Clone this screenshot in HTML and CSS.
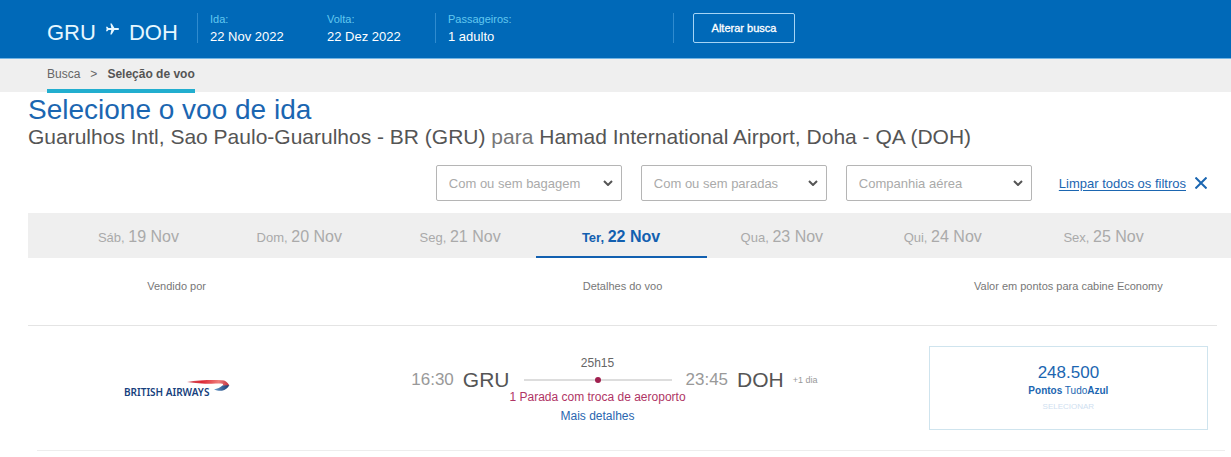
FILE: index.html
```html
<!DOCTYPE html>
<html lang="pt-BR">
<head>
<meta charset="utf-8">
<meta name="viewport" content="width=device-width, initial-scale=1">
<title>Seleção de voo</title>
<link rel="stylesheet" href="styles.css">
</head>
<body>
<header class="search-bar">
  <div class="route">
    <span>GRU</span>
    <svg class="plane" viewBox="0 0 24 24" aria-hidden="true"><path d="M24 12c0-1.200-1-1.800-2.500-1.800h-6L10.500 2H8l1.800 8.200H4.500L2.500 8H0l1.200 4L0 16h2.500l2-2.200h5.300L8 22h2.500l5-8.200h6c1.500 0 2.500-.6 2.500-1.800z"/></svg>
    <span>DOH</span>
  </div>
  <dl class="dates">
    <div class="field"><dt>Ida:</dt><dd>22 Nov 2022</dd></div>
    <div class="field"><dt>Volta:</dt><dd>22 Dez 2022</dd></div>
  </dl>
  <dl class="passengers">
    <div class="field"><dt>Passageiros:</dt><dd>1 adulto</dd></div>
  </dl>
  <div class="change"><button class="change-button" type="button">Alterar busca</button></div>
</header>
<nav class="crumb-bar" aria-label="Etapas">
  <div class="crumbs"><a href="#busca">Busca</a><span>&gt;</span><strong>Seleção de voo</strong></div>
</nav>
<main class="content">
  <h1 class="title">Selecione o voo de ida</h1>
  <h2 class="subtitle">Guarulhos Intl, Sao Paulo-Guarulhos - BR (GRU) <span>para</span> Hamad International Airport, Doha - QA (DOH)</h2>
  <form class="filters">
    <div class="filter">
      <select aria-label="Bagagem"><option>Com ou sem bagagem</option></select>
      <svg class="chevron" viewBox="0 0 10 6" aria-hidden="true"><path d="M1 1l4 4 4-4"/></svg>
    </div>
    <div class="filter">
      <select aria-label="Paradas"><option>Com ou sem paradas</option></select>
      <svg class="chevron" viewBox="0 0 10 6" aria-hidden="true"><path d="M1 1l4 4 4-4"/></svg>
    </div>
    <div class="filter">
      <select aria-label="Companhia"><option>Companhia aérea</option></select>
      <svg class="chevron" viewBox="0 0 10 6" aria-hidden="true"><path d="M1 1l4 4 4-4"/></svg>
    </div>
    <a class="clear" href="#limpar"><span>Limpar todos os filtros</span><svg viewBox="0 0 12 12" aria-hidden="true"><path d="M.5.5l11 11M11.500.5l-11 11"/></svg></a>
  </form>
  <nav class="days" aria-label="Datas">
    <a class="day" href="#d19">Sáb, <b>19 Nov</b></a>
    <a class="day" href="#d20">Dom, <b>20 Nov</b></a>
    <a class="day" href="#d21">Seg, <b>21 Nov</b></a>
    <a class="day active" href="#d22" aria-current="date">Ter, <b>22 Nov</b></a>
    <a class="day" href="#d23">Qua, <b>23 Nov</b></a>
    <a class="day" href="#d24">Qui, <b>24 Nov</b></a>
    <a class="day" href="#d25">Sex, <b>25 Nov</b></a>
  </nav>
  <div class="row heads">
    <div>Vendido por</div>
    <div>Detalhes do voo</div>
    <div>Valor em pontos para cabine Economy</div>
  </div>
  <article class="row flight">
    <div class="airline">
      <svg viewBox="0 0 108 22" role="img" aria-label="British Airways">
        <defs>
          <linearGradient id="red" x1="0" x2="1"><stop offset="0" stop-color="#d0606a"/><stop offset=".35" stop-color="#dc2733"/><stop offset=".75" stop-color="#ee7d7c"/><stop offset="1" stop-color="#c0303d"/></linearGradient>
          <linearGradient id="blue" x1="0" x2="1"><stop offset="0" stop-color="#6a9fd0"/><stop offset="1" stop-color="#17386f"/></linearGradient>
        </defs>
        <path fill="url(#red)" d="M64 3C75 1.200 89 .8 99 1.300c3.200.2 5 1.500 7.300 5L104 7.600 99.500 6.500C101 5.300 99.500 4.500 97 4.600 85 5 74 4.600 64 3z"/>
        <path fill="url(#blue)" d="M91 10.500c3.500-.8 6.500-2 8.500-4l6.800-.2c-1.500 2.700-4 5-7.300 5.500-2.800.2-5.800-.2-8-1.300z"/>
        <text class="logo-text" x="1" y="17">BRITISH AIRWAYS</text>
      </svg>
    </div>
    <div class="trip">
      <div class="duration">25h15</div>
      <div class="end depart"><time>16:30</time><span class="code">GRU</span></div>
      <div class="track"><i class="stop"></i></div>
      <div class="end arrive"><time>23:45</time><span class="code">DOH</span><small>+1 dia</small></div>
      <div class="stops">1 Parada com troca de aeroporto</div>
      <a class="more" href="#detalhes">Mais detalhes</a>
    </div>
    <button class="price" type="button">
      <span class="points">248.500</span>
      <span class="program"><b>Pontos</b> Tudo<b>Azul</b></span>
      <span class="select">SELECIONAR</span>
    </button>
  </article>
  <hr class="divider">
</main>
</body>
</html>
```
FILE: styles.css
```css
* { box-sizing: border-box; }
body { margin: 0; background: #fff; color: #666; font-family: "Liberation Sans", Arial, sans-serif; font-size: 11px; }
a { color: inherit; text-decoration: none; }
button, select { font: inherit; }
dl, dd, h1, h2 { margin: 0; font-weight: 400; }

.search-bar { display: flex; align-items: flex-start; padding: 13px 0 11px 47px; background: #0069b8; border-bottom: 1px solid #72b5e4; color: #fff; }
.route { display: flex; align-items: center; gap: 10px; width: 150px; padding-top: 6px; font-size: 22px; line-height: 28px; color: #e6f7ff; }
.plane { width: 13px; height: 14px; margin-bottom: 8px; fill: #e6f7ff; }
.dates, .passengers, .change { display: flex; height: 30px; border-left: 1px solid #2f8bcf; }
.dates, .passengers { width: 238px; padding-left: 12px; }
.field { flex: none; width: 117px; margin-top: -2px; }
.field dt { font-size: 11px; line-height: 16px; color: #62c8f0; }
.field dd { font-size: 13px; line-height: 20px; }
.change { padding-left: 19px; }
.change-button { width: 102px; border: 1px solid #a5d4f5; border-radius: 2px; background: none; color: #fff; font-size: 11px; padding: 0; -webkit-text-stroke: 0.3px #fff; }

.crumb-bar { display: flex; padding-left: 47px; background: #efefef; }
.crumbs { display: flex; gap: 10px; padding: 8px 0 7px; margin-bottom: -1px; border-bottom: 4px solid #22aecf; font-size: 12px; line-height: 15px; }
.crumbs strong { color: #555; }

.content { padding-left: 28px; }
.title { margin-top: 2px; font-size: 28px; line-height: 32px; color: #1b66b1; }
.subtitle { font-size: 21px; line-height: 22px; color: #555; }
.subtitle span { color: #777; }

.filters { display: flex; justify-content: flex-end; align-items: center; gap: 19px; margin-top: 17px; padding-right: 24px; font-size: 13px; }
.filter { position: relative; width: 186px; }
.filter select { width: 100%; height: 36px; padding: 0 12px; appearance: none; border: 1px solid #b5b5b5; border-radius: 2px; background: #fff; color: #aaa; }
.chevron { position: absolute; top: 15px; right: 9px; width: 10px; height: 6px; fill: none; stroke: #555; stroke-width: 2; pointer-events: none; }
.clear { display: flex; align-items: center; gap: 9px; margin-left: 8px; color: #1b66b1; }
.clear span { text-decoration: underline; text-underline-offset: 2px; }
.clear svg { width: 12px; height: 12px; fill: none; stroke: #1b66b1; stroke-width: 2; }

.days { display: flex; margin-top: 12px; padding: 0 47px 0 30px; background: #efefef; }
.day { position: relative; flex: 1; padding: 13px 0 10px; text-align: center; font-size: 13px; line-height: 21px; color: #aaa; }
.day b { font-size: 16px; font-weight: 400; }
.day.active, .day.active b { font-weight: 700; color: #1260b0; }
.day.active::after { content: ""; position: absolute; left: -5px; right: -6px; bottom: 0; height: 2px; background: #1260b0; }

.row { display: grid; grid-template-columns: 1fr 2fr 1fr; margin-right: 14px; text-align: center; }
.heads { padding: 20px 0 31px; border-bottom: 1px solid #e4e4e4; line-height: 16px; color: #777; }
.flight { padding: 20px 0; }
.divider { height: 1px; margin: 0 6px 0 9px; border: 0; background: #ededed; }

.airline { display: flex; justify-content: center; padding-top: 33px; }
.airline svg { width: 108px; height: 22px; }
.logo-text { font-family: "Noto Sans", sans-serif; font-size: 10px; font-weight: 600; fill: #173f7d; }

.trip { display: grid; grid-template-columns: 1fr 148px 1fr; grid-template-rows: 16px 18px 16px auto; column-gap: 14px; align-content: start; justify-items: center; padding: 9px 50px 0 0; }
.duration, .stops, .more { grid-column: 2; font-size: 12px; line-height: 16px; white-space: nowrap; }
.duration { grid-row: 1; }
.end { grid-row: 2; display: flex; align-items: center; gap: 9px; line-height: 18px; white-space: nowrap; }
.depart { grid-column: 1; justify-self: end; }
.arrive { grid-column: 3; justify-self: start; }
.end time { font-size: 17px; color: #999; }
.code { font-size: 21px; color: #555; }
.end small { font-size: 9px; color: #999; }
.track { grid-area: 2 / 2; position: relative; align-self: center; width: 100%; height: 2px; background: #ddd; }
.stop { position: absolute; left: 50%; top: -2px; width: 6px; height: 6px; margin-left: -3px; border-radius: 50%; background: #a0204f; }
.stops { grid-row: 3; color: #b03565; }
.more { grid-row: 4; margin-top: 3px; color: #2a66b0; }

.price { display: flex; flex-direction: column; align-items: center; height: 84px; margin: 0 9px; padding: 16px 0 0; border: 1px solid #cfe4ee; background: #fff; color: #1b66b1; }
.points { font-size: 17px; line-height: 20px; }
.program { font-size: 10px; line-height: 16px; }
.select { font-size: 8px; line-height: 16px; color: #cfe0f0; }
```
